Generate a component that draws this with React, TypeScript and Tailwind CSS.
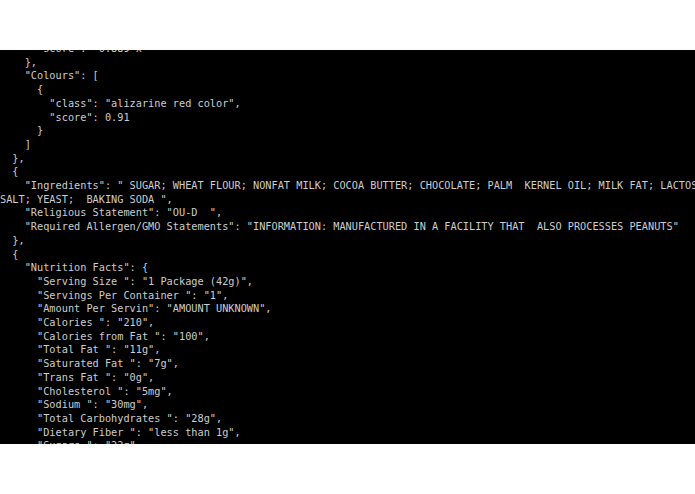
const lines = [
  '      "score": "0.889 x"',
  "    },",
  '    "Colours": [',
  "      {",
  '        "class": "alizarine red color",',
  '        "score": 0.91',
  "      }",
  "    ]",
  "  },",
  "  {",
  '    "Ingredients": " SUGAR; WHEAT FLOUR; NONFAT MILK; COCOA BUTTER; CHOCOLATE; PALM  KERNEL OIL; MILK FAT; LACTOSE;',
  'SALT; YEAST;  BAKING SODA ",',
  '    "Religious Statement": "OU-D  ",',
  '    "Required Allergen/GMO Statements": "INFORMATION: MANUFACTURED IN A FACILITY THAT  ALSO PROCESSES PEANUTS"',
  "  },",
  "  {",
  '    "Nutrition Facts": {',
  '      "Serving Size ": "1 Package (42g)",',
  '      "Servings Per Container ": "1",',
  '      "Amount Per Servin": "AMOUNT UNKNOWN",',
  '      "Calories ": "210",',
  '      "Calories from Fat ": "100",',
  '      "Total Fat ": "11g",',
  '      "Saturated Fat ": "7g",',
  '      "Trans Fat ": "0g",',
  '      "Cholesterol ": "5mg",',
  '      "Sodium ": "30mg",',
  '      "Total Carbohydrates ": "28g",',
  '      "Dietary Fiber ": "less than 1g",',
  '      "Sugars ": "22g",',
];

export default function App() {
  return (
    <div className="w-[695px] h-[494px] bg-white flex flex-col overflow-hidden">
      <div className="h-[50px] shrink-0" />
      <div className="h-[394px] shrink-0 bg-black overflow-hidden">
        <div className="mt-[-8px] font-['DejaVu_Sans_Mono',monospace] text-[10.25px] leading-[13.7px] text-[#cdcdcd]">
          {lines.map((line, i) => (
            <div key={i} className="whitespace-pre">
              {line}
            </div>
          ))}
        </div>
      </div>
    </div>
  );
}
